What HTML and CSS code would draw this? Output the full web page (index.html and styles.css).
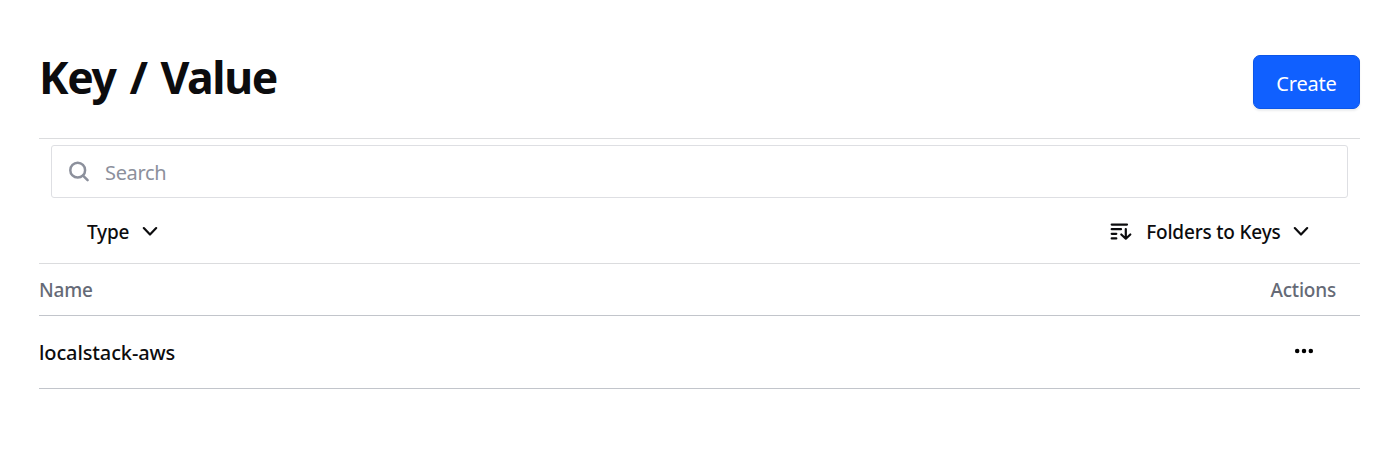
FILE: index.html
```html
<!DOCTYPE html>
<html lang="en">
<head>
<meta charset="utf-8">
<title>Key / Value</title>
<link rel="stylesheet" href="styles.css">
</head>
<body>
<main class="page">
  <header class="page-header">
    <h1 class="title">Key / Value</h1>
    <button class="create"><span>Create</span></button>
  </header>
  <section class="filters">
    <label class="search">
      <svg class="search-icon" width="22" height="22" viewBox="0 0 22 22" fill="none" stroke="currentColor" stroke-width="2.5"><circle cx="9.7" cy="9.2" r="7.4"/><path d="M15 14.6 19.6 19.2" stroke-linecap="round"/></svg>
      <span class="placeholder">Search</span>
    </label>
    <div class="filter-row">
      <div class="dropdown"><span class="type-label">Type</span><svg class="chevron" width="16" height="12" viewBox="0 0 16 12"><path d="M1.8 2.1 8 8.5l6.2-6.4"/></svg></div>
      <div class="dropdown">
        <svg class="sort-icon" width="22" height="18" viewBox="0 0 22 18"><path d="M1.7 1.6H17M1.7 6.2H11M1.7 10.8H6.3M1.7 15.4H6.3M15.8 6V15.6M11.3 11.5l4.5 4.2 4.5-4.2"/></svg>
        <span class="sort-label">Folders to Keys</span><svg class="chevron" width="16" height="12" viewBox="0 0 16 12"><path d="M1.8 2.1 8 8.5l6.2-6.4"/></svg>
      </div>
    </div>
  </section>
  <div class="row row-head"><span class="name-head">Name</span><span class="actions-head">Actions</span></div>
  <div class="row row-item">
    <span class="item-name">localstack-aws</span>
    <svg class="more" width="20" height="6" viewBox="0 0 20 6"><circle cx="3.2" cy="3" r="2.25"/><circle cx="10" cy="3" r="2.25"/><circle cx="16.8" cy="3" r="2.25"/></svg>
  </div>
</main>
</body>
</html>
```
FILE: styles.css
```css
* { box-sizing: border-box; }
body {
  margin: 0;
  background: #fff;
  color: #0c0c0e;
  font-family: "Segoe UI", "Noto Sans", sans-serif;
  font-size: 20px;
}
.page { padding: 55px 28px 0 39px; }
.page-header { display: flex; justify-content: space-between; height: 83px; }
.title { margin: -8px 0 0; font-size: 44.5px; line-height: 60px; font-weight: 700; letter-spacing: -1.4px; word-spacing: 3.8px; white-space: nowrap; }
.create {
  width: 107px;
  height: 54px;
  padding: 3px 0 0;
  border: 1px solid #0c56e9;
  border-radius: 7px;
  background: #1060ff;
  box-shadow: 0 2px 2px rgba(101, 106, 118, 0.12);
  color: #fff;
  font: inherit;
  letter-spacing: -0.2px;
}
.filters { height: 126px; padding: 6px 12px 0; border-top: 1px solid #dbdcde; border-bottom: 1px solid #dbdcde; }
.search { display: flex; align-items: center; height: 53px; padding-left: 16px; border: 1px solid #dedfe3; border-radius: 3px; color: #8c909c; }
.search-icon { margin-right: 15px; }
.placeholder { padding-top: 2px; letter-spacing: -0.35px; }
.filter-row { display: flex; justify-content: space-between; height: 65px; padding: 2px 39px 0 36px; }
.dropdown { display: flex; align-items: center; font-size: 19px; font-weight: 500; letter-spacing: -0.2px; }
.chevron, .sort-icon { fill: none; stroke: #0c0c0e; stroke-width: 2.2; stroke-linecap: round; stroke-linejoin: round; }
.chevron { margin-left: 12.5px; }
.sort-icon { margin-right: 14px; }
.row { display: flex; align-items: center; justify-content: space-between; border-bottom: 1px solid #c2c5cb; }
.row-head { height: 52px; padding-right: 24px; color: #656a76; font-size: 19px; font-weight: 500; letter-spacing: -0.2px; }
.row-item { height: 73px; padding-right: 46px; font-weight: 500; letter-spacing: -0.12px; }
.more { margin-bottom: 3px; }
```
